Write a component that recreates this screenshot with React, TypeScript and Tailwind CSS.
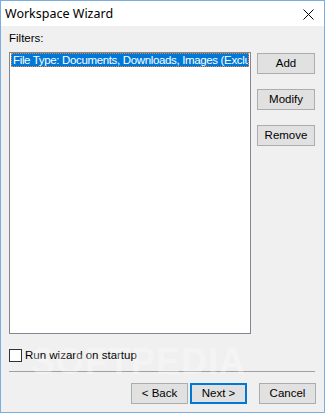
import React from "react";

function Btn({ label, focused = false, w = "w-[57px]" }: { label: string; focused?: boolean; w?: string }) {
  return (
    <div
      className={`${w} h-[21px] flex items-center justify-center bg-[#e1e1e1] text-[11.5px] leading-[13px] text-black ${
        focused ? "border-2 border-[#0078d7]" : "border border-[#adadad]"
      }`}
    >
      {label}
    </div>
  );
}

export default function App() {
  return (
    <div className="w-[325px] h-[414px] bg-white" style={{ fontFamily: '"Liberation Sans", Arial, sans-serif' }}>
      <div className="relative w-[325px] h-[413px] border border-[#7aaee0] flex flex-col overflow-hidden">
        {/* title bar */}
        <div className="h-[25px] bg-white flex items-center justify-between pl-[4px] pr-[10px]">
          <span
            className="text-[12.5px] text-black leading-none mt-[1px]"
            style={{ fontFamily: '"Noto Sans", "Open Sans", sans-serif' }}
          >
            Workspace Wizard
          </span>
          <svg width="11" height="11" viewBox="0 0 11 11" className="mt-[2px]">
            <path d="M0.5 0.5 L10.5 10.5 M10.5 0.5 L0.5 10.5" stroke="#000" strokeWidth="1" fill="none" />
          </svg>
        </div>
        {/* body */}
        <div className="flex-1 bg-[#f0f0f0] flex flex-col px-[8px]">
          <div className="mt-[6px] text-[11.5px] leading-[13px] text-black">Filters:</div>
          <div className="mt-[7px] flex gap-[6px]">
            <div className="w-[242px] h-[282px] bg-white border border-[#828790] pt-0 pl-[1px] pr-[1px]">
              <div className="h-[14px] bg-[#0078d7] border border-dotted border-[#ff8728] text-white text-[11.5px] leading-[12px] tracking-[-0.35px] whitespace-nowrap overflow-hidden pl-[1px]">
                File Type: Documents, Downloads, Images (Exclude: Temporary Files)
              </div>
            </div>
            <div className="flex flex-col gap-[15px] mt-[1px]">
              <Btn label="Add" w="w-[58px]" />
              <Btn label="Modify" w="w-[58px]" />
              <Btn label="Remove" w="w-[58px]" />
            </div>
          </div>
          <div className="mt-[15px] flex items-center gap-[3px]">
            <div className="w-[13px] h-[13px] bg-white border border-[#333333]" />
            <span className="text-[11.5px] leading-[13px] text-black">Run wizard on startup</span>
          </div>
          <div className="mt-[9px] h-px bg-[#a0a0a0] mr-[1px]" />
          <div className="mt-[11px] flex justify-end">
            <Btn label="< Back" />
            <div className="w-[2px]" />
            <Btn label="Next >" focused />
            <div className="w-[12px]" />
            <Btn label="Cancel" />
          </div>
        </div>
        <span className="absolute left-[30px] top-[334px] text-[36px] font-bold tracking-[1px] text-white opacity-30 pointer-events-none select-none">
          SOFTPEDIA
        </span>
      </div>
    </div>
  );
}
